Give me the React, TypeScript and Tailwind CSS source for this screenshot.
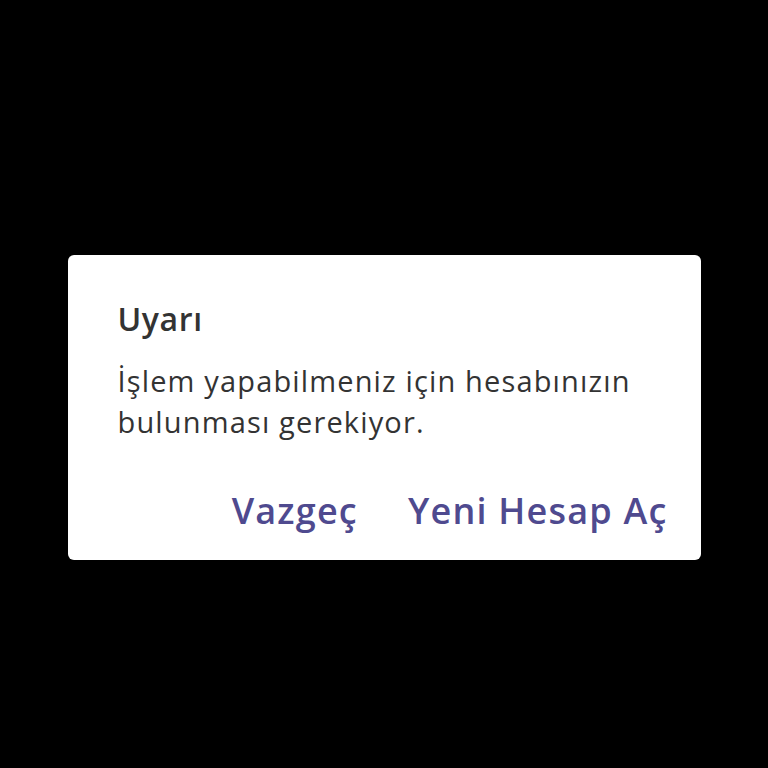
import React from 'react';

export default function App() {
  return (
    <div className="w-[768px] h-[768px] bg-black flex items-center justify-center" style={{ fontFamily: '"Open Sans", Lato, sans-serif' }}>
      <div className="mt-[47px] w-[633px] h-[305px] bg-white rounded-[6px] flex flex-col pl-[50px] pr-[33px] pt-[44px]">
        <h2 className="text-[32px] leading-[40px] font-semibold tracking-[0.6px] text-[#333333]">Uyarı</h2>
        <p className="mt-[21px] text-[29px] leading-[41px] tracking-[1.15px] text-[#333333]">
          İşlem yapabilmeniz için hesabınızın
          <br />
          bulunması gerekiyor.
        </p>
        <div className="mt-[47px] flex justify-end gap-[50px]">
          <button className="text-[36px] leading-[44px] font-semibold tracking-[1.2px] text-[#4f4a8f]">Vazgeç</button>
          <button className="text-[36px] leading-[44px] font-semibold tracking-[1.2px] text-[#4f4a8f]">Yeni Hesap Aç</button>
        </div>
      </div>
    </div>
  );
}
